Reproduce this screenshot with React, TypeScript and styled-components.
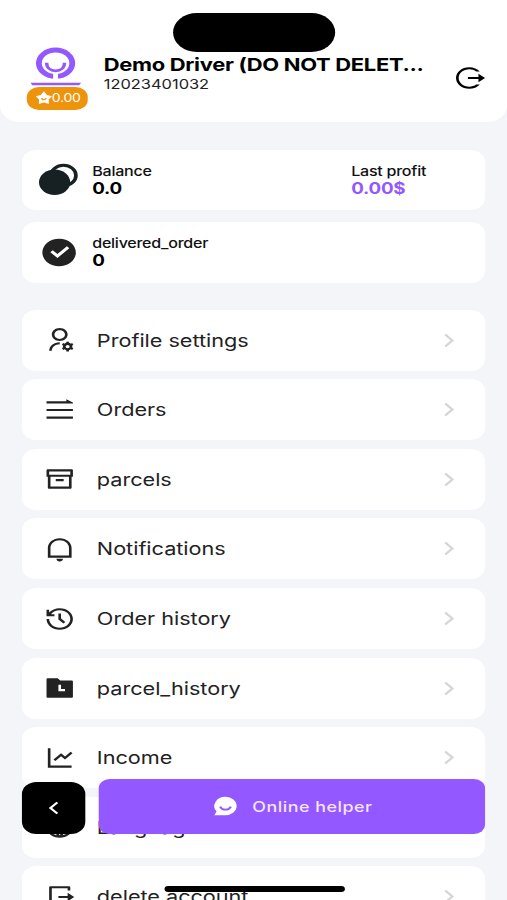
import React from "react";
import styled, { createGlobalStyle } from "styled-components";
import type { IconType } from "react-icons";
import {
  RiArchiveLine,
  RiArrowLeftSLine,
  RiArrowRightSLine,
  RiCheckboxCircleFill,
  RiFolderHistoryFill,
  RiGlobalLine,
  RiHistoryLine,
  RiLineChartLine,
  RiLogoutBoxRLine,
  RiLogoutCircleRLine,
  RiNotificationLine,
  RiStarSmileFill,
  RiUserSettingsLine,
} from "react-icons/ri";

const GlobalStyle = createGlobalStyle`
  * { box-sizing: border-box; }
  html, body { margin: 0; background: #f4f5f9; }
  body { width: 507px; height: 900px; overflow: hidden; }
  svg { display: block; flex: none; }
  button { border: 0; padding: 0; font: inherit; }
`;

/* The phone layout is 416 wide and is widened to fill the window. */
const Screen = styled.div`
  position: relative;
  width: 416px;
  height: 900px;
  overflow: hidden;
  background: #f4f5f9;
  font-family: Inter, "Liberation Sans", sans-serif;
  color: #000;
  transform: scaleX(1.21875);
  transform-origin: 0 0;
`;

const Island = styled.div`
  position: absolute;
  top: 13px;
  left: 142px;
  width: 132.5px;
  height: 39px;
  border-radius: 20px;
  background: #000;
`;

const Header = styled.header`
  display: flex;
  align-items: flex-start;
  height: 122px;
  padding: 47px 18.5px 0 22.4px;
  border-radius: 0 0 16px 16px;
  background: #fff;
`;

const Profile = styled.div`
  display: flex;
  flex-direction: column;
  width: 50px;
  padding-left: 3px;
`;

const Rating = styled.div`
  display: flex;
  align-items: center;
  justify-content: center;
  width: 50px;
  height: 22.5px;
  margin-left: -3px;
  border-radius: 10px;
  background: #ee930c;
  color: #fff;
  font-size: 11.5px;
  letter-spacing: -0.2px;
`;

const Identity = styled.div`
  flex: 1;
  min-width: 0;
  margin: 7px 0 0 12.8px;
`;

const Name = styled.div`
  font-size: 18px;
  line-height: 22px;
  font-weight: 700;
  letter-spacing: -0.26px;
  white-space: nowrap;
`;

const Phone = styled.div`
  font-size: 13.5px;
  line-height: 16px;
  letter-spacing: -0.02px;
  color: #222;
`;

const IconButton = styled.button`
  margin-top: 18px;
  background: none;
  color: #000;
`;

const Stats = styled.section`
  display: flex;
  flex-direction: column;
  gap: 12px;
  padding: 27.7px 17.7px 0 18.3px;
`;

const Card = styled.div`
  display: flex;
  align-items: center;
  height: 60.5px;
  border-radius: 12px;
  background: #fff;
`;

const StatIcon = styled.div<{ $shift?: number }>`
  display: flex;
  justify-content: center;
  width: 57.4px;
  padding-left: ${(p) => p.$shift ?? 0}px;
`;

const Stat = styled.div`
  width: 212.5px;
`;

const StatLabel = styled.div`
  padding-top: 1px;
  font-size: 13.2px;
  line-height: 17px;
  font-weight: 500;
  letter-spacing: -0.22px;
  color: #111;
`;

const StatValue = styled.div<{ $accent?: boolean }>`
  font-size: 15.4px;
  line-height: 18px;
  font-weight: 700;
  letter-spacing: -0.2px;
  color: ${(p) => (p.$accent ? "#9358ff" : "#000")};
`;

const Menu = styled.nav`
  display: flex;
  flex-direction: column;
  gap: 8.6px;
  padding: 27px 17.7px 0 18.3px;
`;

const MenuRow = styled(Card)`
  flex: none;
  height: 61px;
  padding: 0 17.5px 0 17.5px;
  color: #222;
`;

const MenuLabel = styled.span`
  flex: 1;
  margin-left: 17.7px;
  font-size: 17.8px;
  letter-spacing: -0.03px;
`;

const Dock = styled.div`
  position: absolute;
  left: 18.3px;
  right: 17.7px;
  top: 778.5px;
  display: flex;
  align-items: flex-end;
  gap: 11px;
`;

const BackButton = styled.button`
  display: grid;
  place-items: center;
  width: 52px;
  height: 52px;
  border-radius: 12px;
  background: #000;
  color: #fff;
`;

const HelpButton = styled.button`
  flex: 1;
  display: flex;
  align-items: center;
  justify-content: center;
  gap: 11px;
  height: 55px;
  border-radius: 9px;
  background: #9358ff;
  color: #fff;
  font-family: inherit;
  font-size: 14.7px;
  font-weight: 500;
  letter-spacing: 0.4px;
`;

const HelpLabel = styled.span`
  padding-top: 2px;
  color: #f4e4ff;
`;

const HomeBar = styled.div`
  position: absolute;
  left: 134.5px;
  top: 886px;
  width: 148px;
  height: 5.5px;
  border-radius: 3px;
  background: #000;
`;

const Logo = () => (
  <svg width="42" height="40" viewBox="0 0 42 40" fill="none">
    <ellipse cx="20.6" cy="16.2" rx="13.7" ry="13.2" stroke="#9358ff" strokeWidth="4.8" />
    <path d="M18.6 25H22.6V33H18.6Z" fill="#fff" />
    <path d="M13.3 15.7C13.3 20.8 16.4 23.8 20.6 23.8S27.9 20.8 27.9 15.7" stroke="#9358ff" strokeWidth="2.8" />
    <path d="M0 35.7H41.5L40 38.2H1.5Z" fill="#9358ff" />
  </svg>
);

const Coins = () => (
  <svg width="32" height="33" viewBox="0 0 32 33">
    <circle cx="20.1" cy="12.4" r="10.2" fill="#fff" stroke="#172124" strokeWidth="3" />
    <circle cx="12.8" cy="19.2" r="12.8" fill="#172124" />
  </svg>
);

const ChatSmile = () => (
  <svg width="22" height="22" viewBox="0 0 24 24">
    <path d="M12 2A10 10 0 1 1 12 22H2L4 18A10 10 0 0 1 12 2Z" fill="#fff" />
    <path d="M7.2 12.6C8.2 15 9.8 16 12 16S15.8 15 16.8 12.6" fill="none" stroke="#9358ff" strokeWidth="1.9" />
  </svg>
);

const OrdersIcon: IconType = ({ size }) => (
  <svg width={size} height={size} viewBox="0 0 24 24" fill="currentColor">
    <path d="M2 4H17V2L22 5V6H2ZM2 11H22V13H2ZM2 18H22V20H2Z" />
  </svg>
);

const entries: { label: string; Icon: IconType }[] = [
  { label: "Profile settings", Icon: RiUserSettingsLine },
  { label: "Orders", Icon: OrdersIcon },
  { label: "parcels", Icon: RiArchiveLine },
  { label: "Notifications", Icon: RiNotificationLine },
  { label: "Order history", Icon: RiHistoryLine },
  { label: "parcel_history", Icon: RiFolderHistoryFill },
  { label: "Income", Icon: RiLineChartLine },
  { label: "Language", Icon: RiGlobalLine },
  { label: "delete account", Icon: RiLogoutBoxRLine },
];

export default function App() {
  return (
    <>
      <GlobalStyle />
      <Screen>
        <Header>
          <Profile>
            <Logo />
            <Rating>
              <RiStarSmileFill size={14} />
              0.00
            </Rating>
          </Profile>
          <Identity>
            <Name>Demo Driver (DO NOT DELET...</Name>
            <Phone>12023401032</Phone>
          </Identity>
          <IconButton aria-label="Log out">
            <RiLogoutCircleRLine size={26} />
          </IconButton>
        </Header>
        <Stats>
          <Card>
            <StatIcon $shift={1.4}>
              <Coins />
            </StatIcon>
            <Stat>
              <StatLabel>Balance</StatLabel>
              <StatValue>0.0</StatValue>
            </Stat>
            <div>
              <StatLabel>Last profit</StatLabel>
              <StatValue $accent>0.00$</StatValue>
            </div>
          </Card>
          <Card>
            <StatIcon $shift={3}>
              <RiCheckboxCircleFill size={33} color="#222" />
            </StatIcon>
            <Stat>
              <StatLabel>delivered_order</StatLabel>
              <StatValue>0</StatValue>
            </Stat>
          </Card>
        </Stats>
        <Menu>
          {entries.map(({ label, Icon }) => (
            <MenuRow key={label}>
              <Icon size={26} />
              <MenuLabel>{label}</MenuLabel>
              <RiArrowRightSLine size={25} color="#d6d6d6" />
            </MenuRow>
          ))}
        </Menu>
        <Dock>
          <BackButton aria-label="Back">
            <RiArrowLeftSLine size={24} />
          </BackButton>
          <HelpButton>
            <ChatSmile />
            <HelpLabel>Online helper</HelpLabel>
          </HelpButton>
        </Dock>
        <HomeBar />
        <Island />
      </Screen>
    </>
  );
}
